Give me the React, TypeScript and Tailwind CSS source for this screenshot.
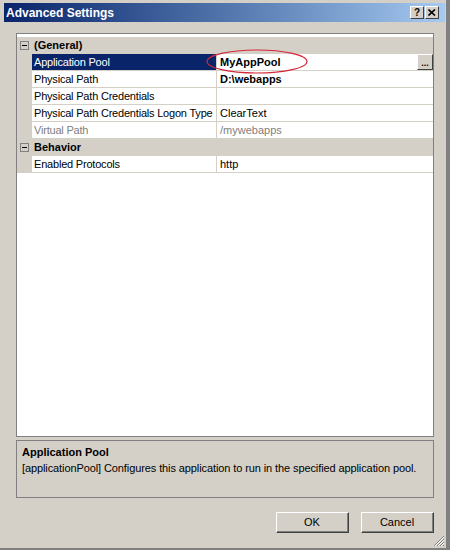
import React from 'react';

type Prop = {
  name: string;
  value: string;
  bold?: boolean;
  disabled?: boolean;
  selected?: boolean;
  browse?: boolean;
};

const general: Prop[] = [
  { name: 'Application Pool', value: 'MyAppPool', bold: true, selected: true, browse: true },
  { name: 'Physical Path', value: 'D:\\webapps', bold: true },
  { name: 'Physical Path Credentials', value: '' },
  { name: 'Physical Path Credentials Logon Type', value: 'ClearText' },
  { name: 'Virtual Path', value: '/mywebapps', disabled: true },
];

const behavior: Prop[] = [{ name: 'Enabled Protocols', value: 'http' }];

const font = { fontFamily: '"Liberation Sans", Arial, sans-serif' };

const Collapse = () => (
  <div className="w-[15px] h-full flex items-center justify-center">
    <div className="relative w-[9px] h-[9px] border border-[#808080] bg-[#d4d0c8]">
      <div className="absolute left-[1px] top-[3px] w-[5px] h-px bg-black" />
    </div>
  </div>
);

const Category = ({ label }: { label: string }) => (
  <div className="flex h-[17px] bg-[#d4d0c8] items-center">
    <Collapse />
    <span className="pl-[2px] font-bold text-[11px] text-black">{label}</span>
  </div>
);

const Row = ({ p }: { p: Prop }) => (
  <div className="flex h-[17px]">
    <div className="w-[15px] bg-[#d4d0c8]" />
    <div
      className={
        'w-[185px] border-b border-r border-[#d4d0c8] pl-[2px] flex items-center text-[11px] tracking-[-0.2px] whitespace-nowrap overflow-hidden ' +
        (p.selected ? 'bg-[#0a246a] text-white' : p.disabled ? 'text-[#808080]' : 'text-black')
      }
    >
      {p.name}
    </div>
    <div
      className={
        'flex-1 border-b border-[#d4d0c8] pl-[3px] flex items-center text-[11px] ' +
        (p.bold ? 'font-bold ' : '') +
        (p.disabled ? 'text-[#808080]' : 'text-black')
      }
    >
      <span className="flex-1">{p.value}</span>
      {p.browse && (
        <div className="w-[16px] h-[16px] bg-[#d4d0c8] border-t border-l border-white border-r border-b border-r-[#404040] border-b-[#404040] flex items-end justify-center text-[9px] leading-[10px] font-bold pb-[1px]">
          ...
        </div>
      )}
    </div>
  </div>
);

const ClassicButton = ({ label }: { label: string }) => (
  <div className="w-[73px] h-[21px] bg-[#d4d0c8] border border-t-white border-l-white border-r-[#404040] border-b-[#404040] flex">
    <div className="flex-1 border-r border-b border-[#808080] flex items-center justify-center text-[11px] text-black">
      {label}
    </div>
  </div>
);

export default function App() {
  return (
    <div
      className="relative w-[450px] h-[550px] bg-[#d4d0c8] border-r-4 border-r-[#808080] border-b-2 border-b-[#808080] pl-[4px] pr-[1px] pt-[3px] flex flex-col overflow-hidden"
      style={font}
    >
      {/* Title bar */}
      <div className="h-[19px] flex items-center bg-gradient-to-r from-[#0a246a] to-[#a6caf0] pl-[2px] pr-[6px]">
        <span className="flex-1 text-white font-bold text-[12px]">Advanced Settings</span>
        <div className="flex gap-[1px]">
          <div className="w-[14px] h-[13px] bg-[#d4d0c8] border border-t-white border-l-white border-r-[#404040] border-b-[#404040] flex items-center justify-center text-[10px] font-bold leading-none">
            ?
          </div>
          <div className="w-[14px] h-[13px] bg-[#d4d0c8] border border-t-white border-l-white border-r-[#404040] border-b-[#404040] flex items-center justify-center">
            <svg width="8" height="7" viewBox="0 0 8 7">
              <path d="M0.5 0.5 L7 6.5 M7 0.5 L0.5 6.5" stroke="black" strokeWidth="1.6" />
            </svg>
          </div>
        </div>
      </div>

      {/* Property grid */}
      <div className="relative ml-[12px] mt-[11px] w-[418px] h-[404px] border border-[#808080] bg-white pt-[3px]">
        <Category label="(General)" />
        {general.map((p) => (
          <Row key={p.name} p={p} />
        ))}
        <Category label="Behavior" />
        {behavior.map((p) => (
          <Row key={p.name} p={p} />
        ))}
        <svg className="absolute left-[189px] top-[15px]" width="104" height="26" viewBox="0 0 104 26">
          <ellipse cx="51" cy="12.5" rx="50" ry="11.5" fill="none" stroke="#d4283a" strokeWidth="1.1" />
        </svg>
      </div>

      {/* Description */}
      <div className="ml-[12px] mt-[3px] w-[418px] h-[58px] border border-[#808080] px-[5px] pt-[3px] text-[11px] text-black">
        <div className="font-bold leading-[16px]">Application Pool</div>
        <div className="leading-[16px] tracking-[-0.1px]">
          [applicationPool] Configures this application to run in the specified application pool.
        </div>
      </div>

      {/* Buttons */}
      <div className="flex justify-end gap-[12px] mt-[14px] w-[430px]">
        <ClassicButton label="OK" />
        <ClassicButton label="Cancel" />
      </div>

      {/* Resize grip */}
      <svg className="absolute right-[1px] bottom-[1px]" width="12" height="12" viewBox="0 0 12 12">
        <path d="M11 1 L1 11 M11 4 L4 11 M11 7 L7 11 M11 10 L10 11" stroke="#808080" strokeWidth="1" />
        <path d="M11 2 L2 11 M11 5 L5 11 M11 8 L8 11" stroke="#ffffff" strokeWidth="1" />
      </svg>
    </div>
  );
}
